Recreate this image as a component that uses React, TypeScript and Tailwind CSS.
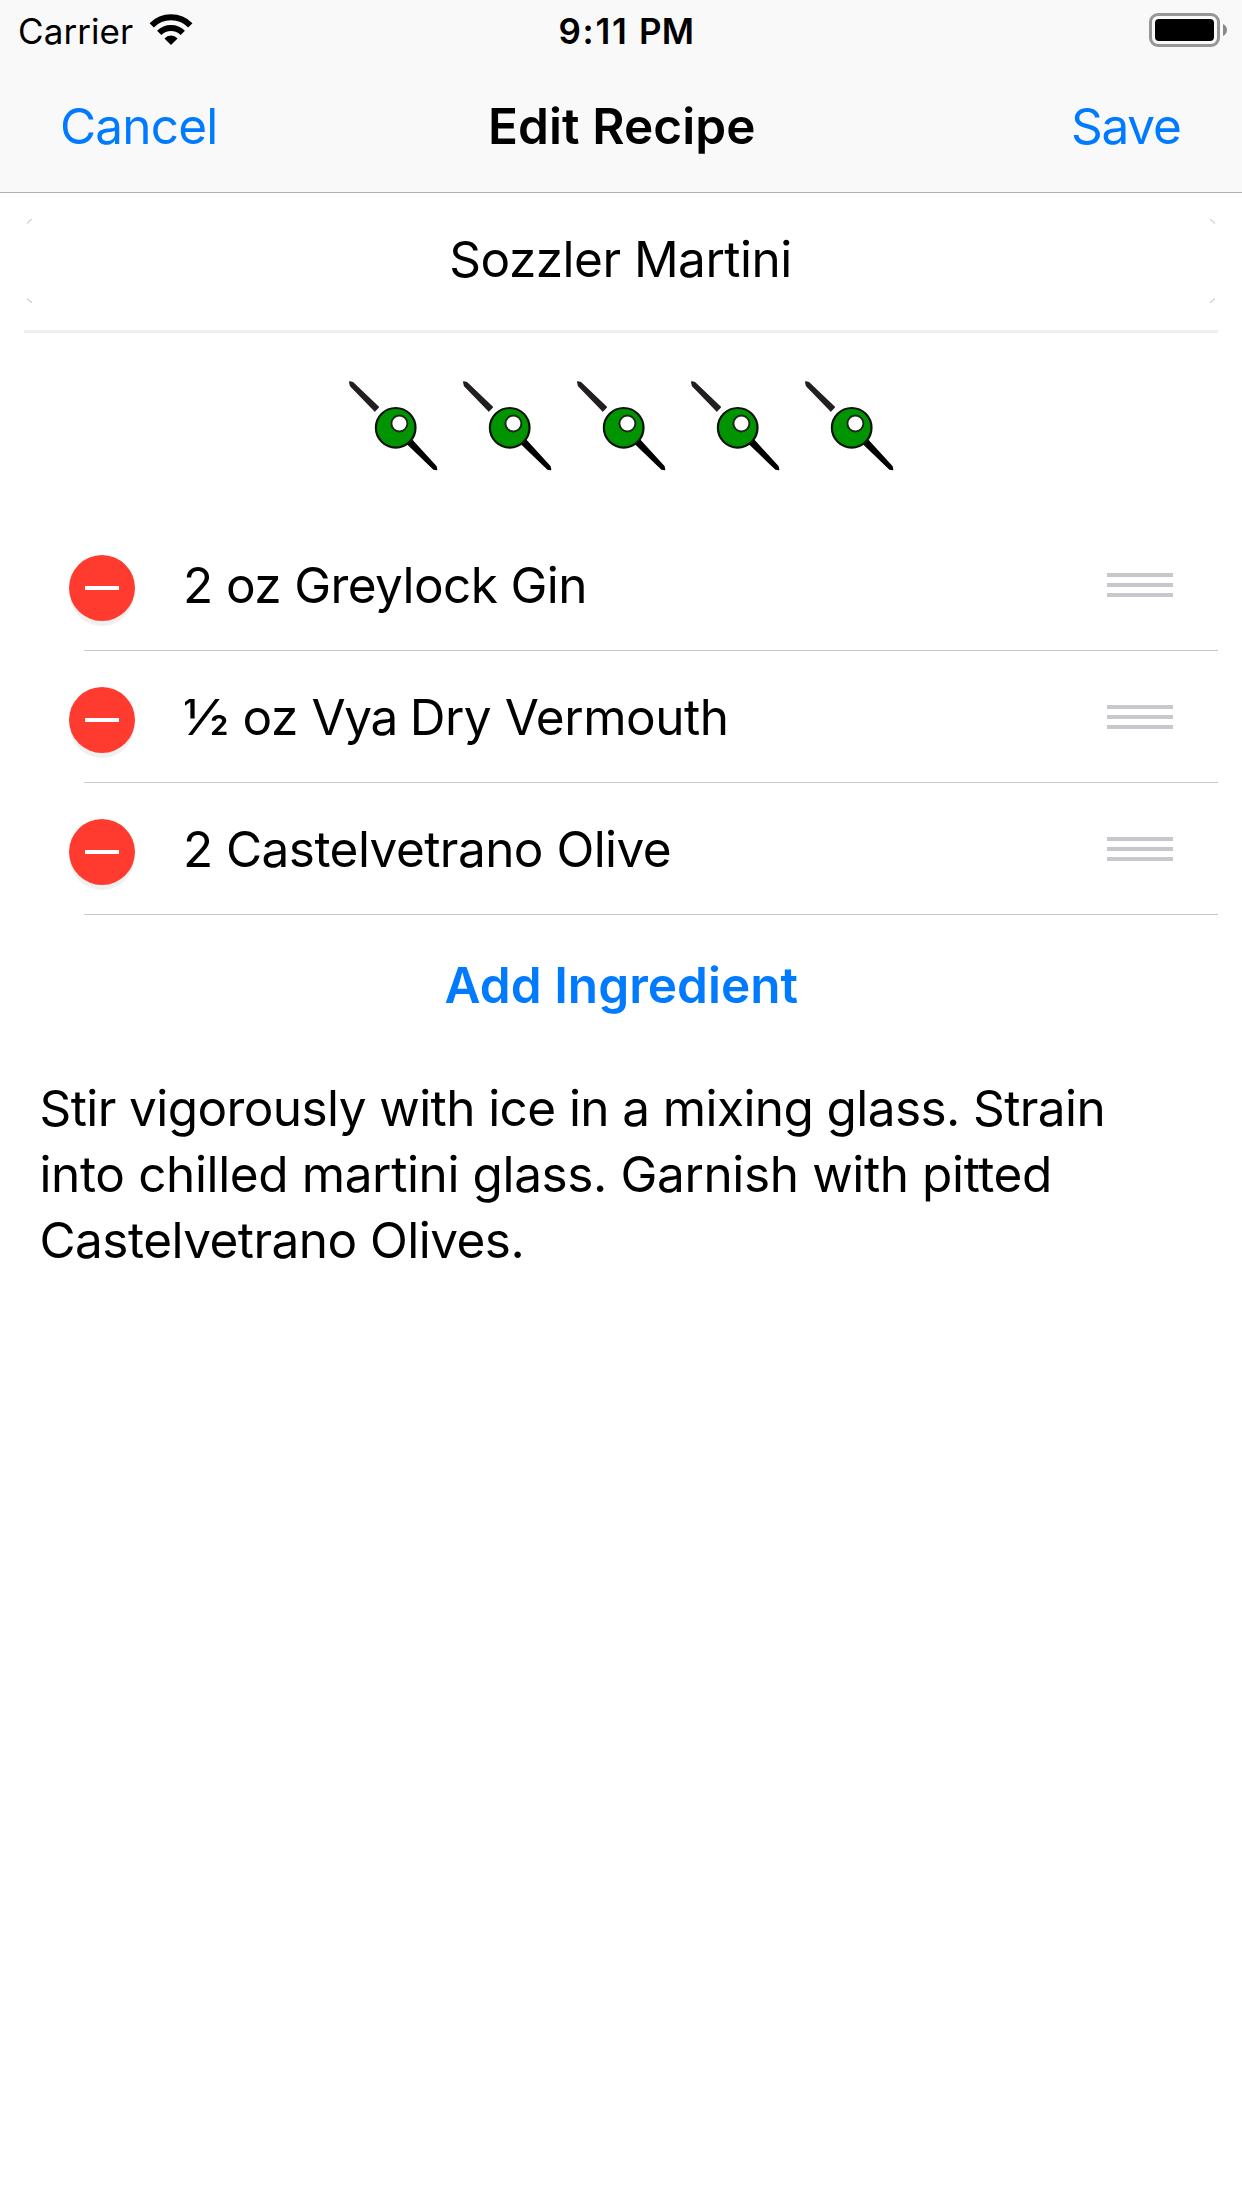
import type { ReactNode } from 'react';

const INGREDIENTS: { id: string; label: ReactNode; className: string }[] = [
  { id: 'gin', label: '2 oz Greylock Gin', className: 'ml-[48px] tracking-[-0.61px]' },
  {
    id: 'vermouth',
    label: (
      <>
        <span className="inline-block origin-left scale-x-[1.1] tracking-[4px]">½</span> oz{' '}
        <span className="tracking-[-1.3px]">Vya </span>Dry Vermouth
      </>
    ),
    className: 'ml-[48.2px] tracking-[-0.47px]',
  },
  { id: 'olive', label: '2 Castelvetrano Olive', className: 'ml-[48px] tracking-[-0.55px]' },
];

function WifiIcon() {
  return (
    <svg className="ml-[16px] mt-[14px] h-[32px] w-[44px]" viewBox="149 14 44 32">
      <g fill="none" stroke="#000">
        <path d="M151.7 25.3 A27.3 27.3 0 0 1 190.3 25.3" strokeWidth="6" />
        <path d="M159.2 32.9 A16.6 16.6 0 0 1 182.8 32.9" strokeWidth="6" />
      </g>
      <path d="M164.4 38.4 A9.2 9.2 0 0 1 177.6 38.4 L171 45 Z" fill="#000" />
    </svg>
  );
}

function BatteryIcon() {
  return (
    <div className="flex items-center gap-[3px]">
      <div className="h-[34px] w-[71px] rounded-[9px] border-[3px] border-[#969696] p-[3px]">
        <div className="h-full w-full rounded-[4px] bg-black" />
      </div>
      <svg className="h-[12px] w-[4px]" viewBox="0 0 4 12">
        <path d="M0 0 C2.2 1 4 3.2 4 6 S2.2 11 0 12 Z" fill="#8a8a8a" />
      </svg>
    </div>
  );
}

function Olive() {
  return (
    <svg className="h-[114px] w-[114px]" viewBox="0 0 114 114">
      <path d="M10.8 11 L13.8 11.8 L39.2 36.2 L35.8 39.8 L11.6 14.6 Z" fill="#231f20" stroke="#231f20" strokeWidth="1.6" strokeLinejoin="round" />
      <path d="M72.2 68.5 L96.9 95.6 L97.5 98.4 L94.7 98 L68.2 72.5 Z" fill="#000" stroke="#000" strokeWidth="1.6" strokeLinejoin="round" />
      <circle cx="56.7" cy="56.8" r="19.8" fill="#009400" stroke="#0c120c" strokeWidth="2.2" />
      <circle cx="60.4" cy="52.5" r="8" fill="#fff" stroke="#1d2a1d" strokeWidth="2" />
    </svg>
  );
}

function FieldCorners() {
  return (
    <svg className="absolute inset-0 h-full w-full" viewBox="0 0 1188 84" fill="none" stroke="#cdcdcd" strokeWidth="1.1">
      <path d="M0 4.7 Q2 1.6 5 0.4" />
      <path d="M1183 0.4 Q1186 1.6 1188 4.7" />
      <path d="M0 79.3 Q2 82.4 5 83.6" />
      <path d="M1183 83.6 Q1186 82.4 1188 79.3" />
    </svg>
  );
}

export default function App() {
  return (
    <div className="flex h-[2208px] w-[1242px] flex-col overflow-hidden bg-white font-['Inter','Liberation_Sans',sans-serif] text-[49.5px] leading-[66px] text-black">
      <header className="h-[193px] shrink-0 border-b border-[#b2b2b2] bg-[#f9f9f9]">
        <div className="grid h-[60px] grid-cols-3 text-[35px] leading-[58px]">
          <div className="flex pl-[18px]">
            <span className="mt-[2px] tracking-[0.08px]">Carrier</span>
            <WifiIcon />
          </div>
          <span className="mt-[2px] whitespace-nowrap pl-[144.5px] font-semibold tracking-[0.2px]">
            <span className="tracking-[1.7px]">9:11 </span>PM
          </span>
          <div className="flex items-center justify-end pr-[15px]">
            <BatteryIcon />
          </div>
        </div>
        <nav className="mt-[33px] flex">
          <button className="w-[428px] pl-[60px] text-left tracking-[-0.8px] text-[#007aff]">Cancel</button>
          <h1 className="w-[386px] pl-[60px] text-left font-semibold tracking-[0.08px]">Edit Recipe</h1>
          <button className="w-[428px] pl-[257px] text-left tracking-[-1.25px] text-[#007aff]">Save</button>
        </nav>
      </header>

      <main className="flex flex-col">
        <div className="mx-[24px] border-b-[3px] border-[#efeff4] px-[3px] pb-[27px] pt-[26px]">
          <div className="relative h-[84px] pl-[422.3px] pt-[7px] tracking-[-0.52px]">
            <FieldCorners />
            Sozzler Martini
          </div>
        </div>

        <div className="ml-[339px] mt-[38px] flex h-[148px]">
          {[1, 2, 3, 4, 5].map((n) => (
            <Olive key={n} />
          ))}
        </div>

        <ul>
          {INGREDIENTS.map((item) => (
            <li key={item.id} className="relative flex h-[132px] pl-[69px]">
              <div className="mt-[36px] flex h-[66px] w-[66px] shrink-0 items-center justify-center rounded-full bg-[#ff3b30] shadow-[0_6px_1px_-1px_#f0f0f0]">
                <div className="h-[4px] w-[34px] bg-white" />
              </div>
              <span className={`mt-[33px] whitespace-pre ${item.className}`}>{item.label}</span>
              <div className="ml-auto mr-[69px] mt-[54px] flex w-[66px] flex-col gap-[6px]">
                <div className="h-[4px] bg-[#c7c7cc]" />
                <div className="h-[4px] bg-[#c7c7cc]" />
                <div className="h-[4px] bg-[#c7c7cc]" />
              </div>
              <div className="absolute bottom-0 left-[84px] right-[24px] h-px bg-[#c8c7cc]" />
            </li>
          ))}
        </ul>

        <button className="mt-[37px] pl-[444.5px] text-left font-semibold tracking-[0.03px] text-[#007aff]">Add Ingredient</button>

        <p className="mt-[57px] whitespace-nowrap pl-[39.5px]">
          <span className="block tracking-[-0.59px]">Stir vigorously with ice in a mixing glass. Strain</span>
          <span className="block tracking-[-0.38px]">into chilled martini glass. Garnish with pitted</span>
          <span className="block tracking-[-0.54px]">Castelvetrano Olives.</span>
        </p>
      </main>
    </div>
  );
}
